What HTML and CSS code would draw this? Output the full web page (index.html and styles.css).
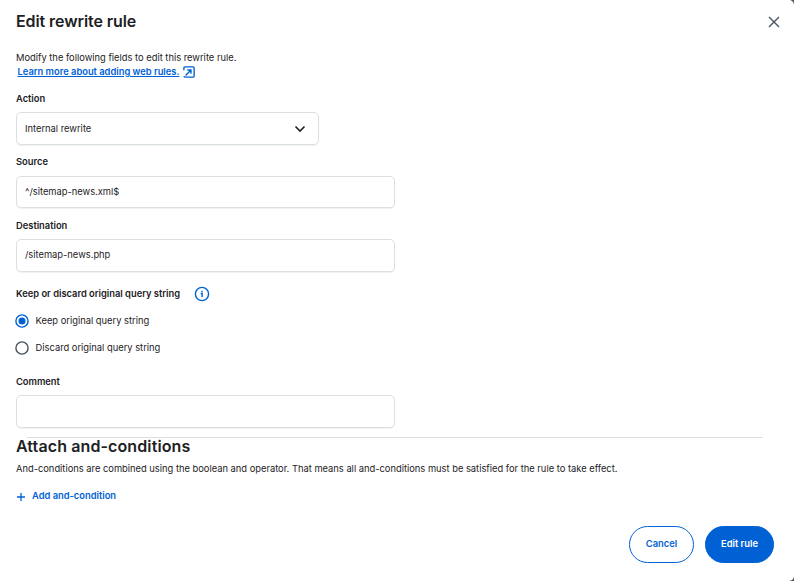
FILE: index.html
```html
<!DOCTYPE html>
<html lang="en">
<head>
<meta charset="utf-8">
<title>Edit rewrite rule</title>
<link rel="stylesheet" href="styles.css">
</head>
<body>
<main class="modal">
  <header class="modal-header">
    <h1>Edit rewrite rule</h1>
    <svg class="close" viewBox="0 0 12 12"><path d="M1 1l10 10M11 1L1 11"/></svg>
  </header>
  <div class="intro">
    <p class="intro-text">Modify the following fields to edit this rewrite rule.</p>
    <a class="learn"><span>Learn more about adding web rules.</span>
      <svg class="external" viewBox="0 0 14 14"><path d="M1 5V2.400Q1 1 2.400 1h9.200Q13 1 13 2.400v9.200Q13 13 11.600 13H2.400Q1.200 13 1.200 11.800M3 11L9 5M5 4.700H9.300V9"/></svg>
    </a>
  </div>
  <div class="field">
    <label>Action</label>
    <div class="control select"><span>Internal rewrite</span>
      <svg class="chevron" viewBox="0 0 12 8"><path d="M1.500 1.500L6 6l4.500-4.500"/></svg>
    </div>
  </div>
  <div class="field source">
    <label>Source</label>
    <div class="control"><span>^/sitemap-news.xml$</span></div>
  </div>
  <div class="field">
    <label>Destination</label>
    <div class="control"><span>/sitemap-news.php</span></div>
  </div>
  <div class="query">
    <div class="query-title"><b>Keep or discard original query string</b>
      <svg class="info" viewBox="0 0 16 16"><circle cx="8" cy="8" r="6.600"/><path d="M6.700 7.500H8.100V11M8 4.700v1.500"/></svg>
    </div>
    <div class="option"><svg class="radio checked" viewBox="0 0 14 14"><circle cx="7" cy="7" r="6.100"/><circle class="dot" cx="7" cy="7" r="3.500"/></svg><span>Keep original query string</span></div>
    <div class="option"><svg class="radio" viewBox="0 0 14 14"><circle cx="7" cy="7" r="6.100"/></svg><span>Discard original query string</span></div>
  </div>
  <div class="field comment">
    <label>Comment</label>
    <div class="control"></div>
  </div>
  <hr>
  <section class="conditions">
    <h2>Attach and-conditions</h2>
    <p>And-conditions are combined using the boolean and operator. That means all and-conditions must be satisfied for the rule to take effect.</p>
    <div class="add">
      <svg class="plus" viewBox="0 0 8 8"><path d="M4 0v8M0 4h8"/></svg><span>Add and-condition</span>
    </div>
  </section>
  <footer class="actions">
    <button class="btn cancel">Cancel</button>
    <button class="btn primary">Edit rule</button>
  </footer>
</main>
</body>
</html>
```
FILE: styles.css
```css
* { box-sizing: border-box; }
body {
  margin: 0;
  background: #555;
  color: #1d2124;
  font-family: Inter, "Liberation Sans", sans-serif;
  font-size: 9.34px;
  line-height: 14px;
}
.modal {
  width: 794px;
  height: 581px;
  padding: 0 14px 0 16px;
  background: #fff;
  border-radius: 0 5px 5px 0;
  overflow: hidden;
}
svg { fill: none; flex: none; }
h1, h2, p { margin: 0; }
h1, h2 { font-size: 16px; font-weight: 600; line-height: 20px; }
h1 { letter-spacing: -0.09px; margin-top: -2px; }
h2 { letter-spacing: 0.11px; }
.modal-header {
  display: flex;
  justify-content: space-between;
  align-items: center;
  height: 43px;
}
.close { width: 12px; height: 12px; stroke: #46535e; stroke-width: 1.4; }
.intro { padding-top: 8px; height: 49px; }
.learn {
  display: flex;
  align-items: center;
  gap: 4px;
  height: 14px;
  padding-left: 1.5px;
  color: #0061d5;
  font-weight: 600;
}
.learn span { text-decoration: underline; text-underline-offset: 1px; }
.external { width: 12px; height: 12px; stroke: #0061d5; stroke-width: 1.6; }
.field { height: 63px; }
.field label { display: block; height: 20px; font-weight: 600; }
.field.source { height: 64px; }
.source label { height: 21px; }
.control {
  display: flex;
  align-items: center;
  width: 379px;
  height: 33px;
  padding: 0 9px 1px 8px;
  border: 1px solid #dbdfe1;
  border-radius: 5px;
  box-shadow: 0 1px 1px #eef1f2;
}
.source .control { height: 32px; }
.select { width: 303px; justify-content: space-between; padding: 1px 12px 0 8px; }
.chevron { width: 12px; height: 8px; stroke: #1d2124; stroke-width: 1.6; }
.query { height: 93px; margin-top: -2px; }
.query-title { display: flex; align-items: center; gap: 14px; height: 27px; }
.query-title b { font-weight: 600; }
.info { width: 16px; height: 16px; stroke: #0061d5; stroke-width: 1.4; }
.option { display: flex; align-items: center; height: 27px; gap: 6.600px; margin-left: -1px; }
.radio { width: 14px; height: 14px; stroke: #46535e; stroke-width: 1.4; }
.radio.checked { stroke: #0061d5; }
.radio .dot { fill: #0061d5; stroke: none; }
.comment { height: 62px; margin-top: 2px; }
hr { width: 736px; height: 1px; margin: 0 0 0 11px; border: 0; background: #dbdfe1; }
.conditions h2 { margin-top: -2px; }
.conditions p { margin-top: 6px; white-space: nowrap; }
.add { display: flex; align-items: center; gap: 7.500px; margin-top: 13px; padding-left: 0.500px; color: #0061d5; font-weight: 600; }
.plus { width: 8px; height: 8px; margin-top: 1px; stroke: #0061d5; stroke-width: 1.3; }
.actions { display: flex; justify-content: flex-end; gap: 11px; margin: 23px 6px 0 0; }
.btn {
  height: 37px;
  padding: 0 0 2px;
  border: 1px solid #0061d5;
  border-radius: 19px;
  font: 600 9.34px Inter, "Liberation Sans", sans-serif;
}
.cancel { width: 65px; color: #0061d5; background: #fff; }
.primary { width: 69px; color: #fff; background: #0061d5; }
```
